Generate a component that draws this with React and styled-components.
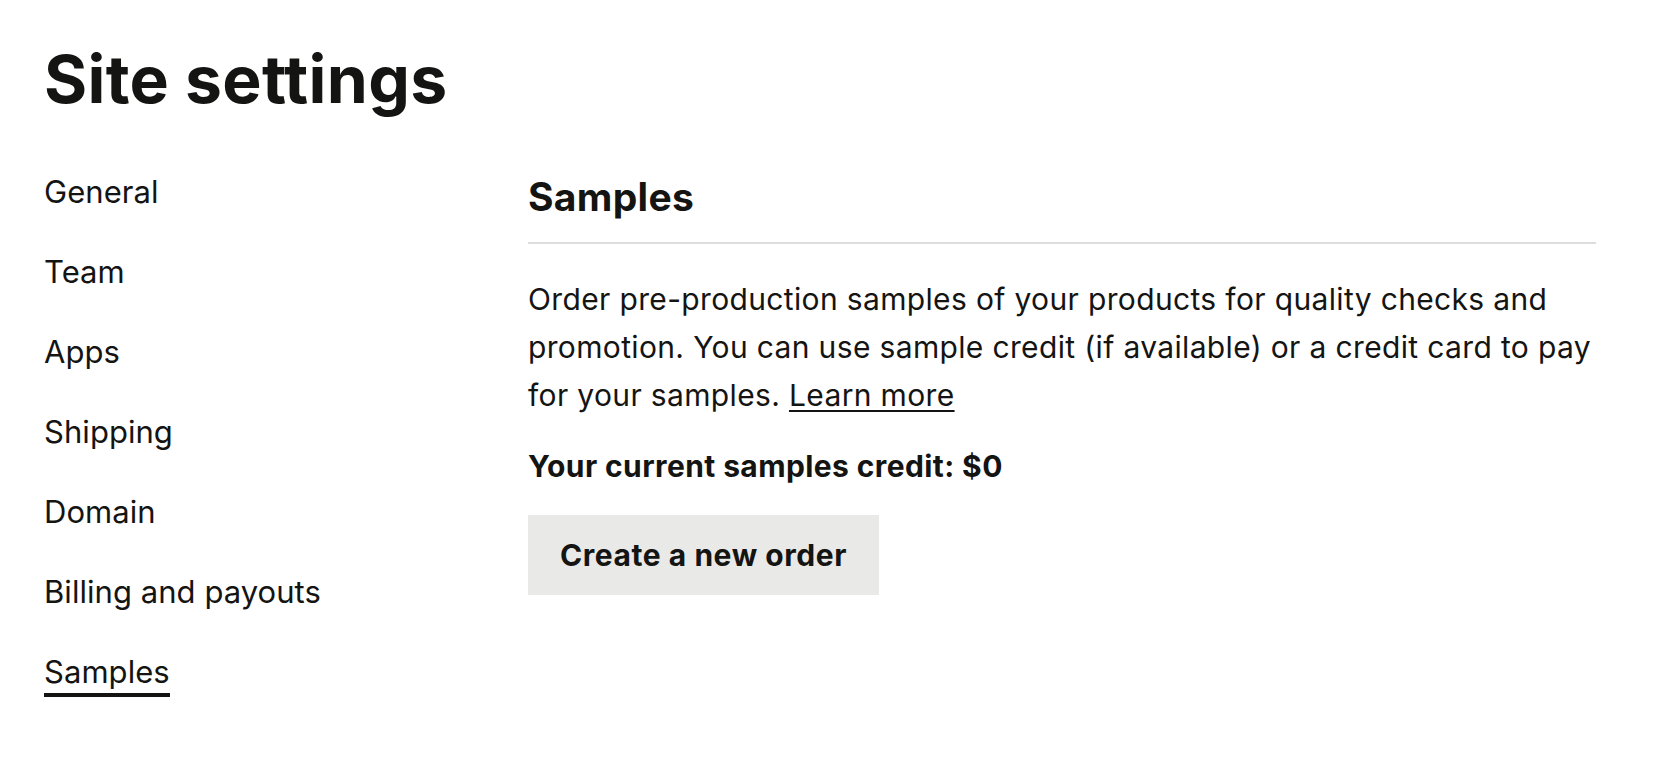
import styled, { createGlobalStyle } from 'styled-components';

const GlobalStyle = createGlobalStyle`
  html, body {
    margin: 0;
    padding: 0;
    background: #ffffff;
  }
  body {
    font-family: 'Inter', 'Liberation Sans', sans-serif;
    color: #141412;
    -webkit-font-smoothing: antialiased;
  }
`;

const Page = styled.div`
  padding: 46px 62px 60px 44px;
  box-sizing: border-box;
  width: 1658px;
`;

const Title = styled.h1`
  margin: 0;
  font-size: 66px;
  line-height: 66px;
  font-weight: 700;
  letter-spacing: 0.3px;
`;

const Body = styled.div`
  display: grid;
  grid-template-columns: 484px 1fr;
  margin-top: 61px;
`;

const Nav = styled.nav`
  display: flex;
  flex-direction: column;
  align-items: flex-start;
  gap: 35px;
`;

const NavLink = styled.a`
  font-size: 31px;
  line-height: 38px;
  padding-bottom: 2px;
  letter-spacing: 0.05px;
  color: #141412;
  text-decoration: none;
  border-bottom: 4px solid ${p => (p.$active ? '#141412' : 'transparent')};
  margin-bottom: 1px;
  cursor: pointer;
`;

const Main = styled.section`
  display: flex;
  flex-direction: column;
  align-items: flex-start;
`;

const SectionHeader = styled.div`
  align-self: stretch;
  padding-bottom: 22px;
  border-bottom: 2px solid #dddddb;
`;

const SectionTitle = styled.h2`
  margin: 0;
  font-size: 39px;
  line-height: 47px;
  font-weight: 700;
  letter-spacing: 0.3px;
`;

const Text = styled.p`
  margin: 31px 0 0;
  font-size: 30px;
  line-height: 48px;
  letter-spacing: 0.35px;
`;

const Link = styled.a`
  color: inherit;
  text-decoration: underline;
  text-decoration-thickness: 2px;
  text-underline-offset: 4px;
  cursor: pointer;
`;

const Credit = styled.p`
  margin: 29px 0 0;
  font-size: 30px;
  line-height: 36px;
  font-weight: 700;
  letter-spacing: 0.4px;
`;

const Button = styled.button`
  margin-top: 31px;
  height: 80px;
  padding: 0 32px;
  border: none;
  border-radius: 0;
  background: #e9e9e7;
  color: #141412;
  font-family: inherit;
  font-size: 30px;
  font-weight: 700;
  letter-spacing: 0.55px;
  white-space: nowrap;
  cursor: pointer;
`;

const navItems = ['General', 'Team', 'Apps', 'Shipping', 'Domain', 'Billing and payouts', 'Samples'];

export default function App() {
  return (
    <Page>
      <GlobalStyle />
      <Title>Site settings</Title>
      <Body>
        <Nav>
          {navItems.map(item => (
            <NavLink key={item} $active={item === 'Samples'}>{item}</NavLink>
          ))}
        </Nav>
        <Main>
          <SectionHeader>
            <SectionTitle>Samples</SectionTitle>
          </SectionHeader>
          <Text>
            Order pre-production samples of your products for quality checks and promotion. You can use
            sample credit (if available) or a credit card to pay for your samples. <Link>Learn more</Link>
          </Text>
          <Credit>Your current samples credit: $0</Credit>
          <Button>Create a new order</Button>
        </Main>
      </Body>
    </Page>
  );
}
